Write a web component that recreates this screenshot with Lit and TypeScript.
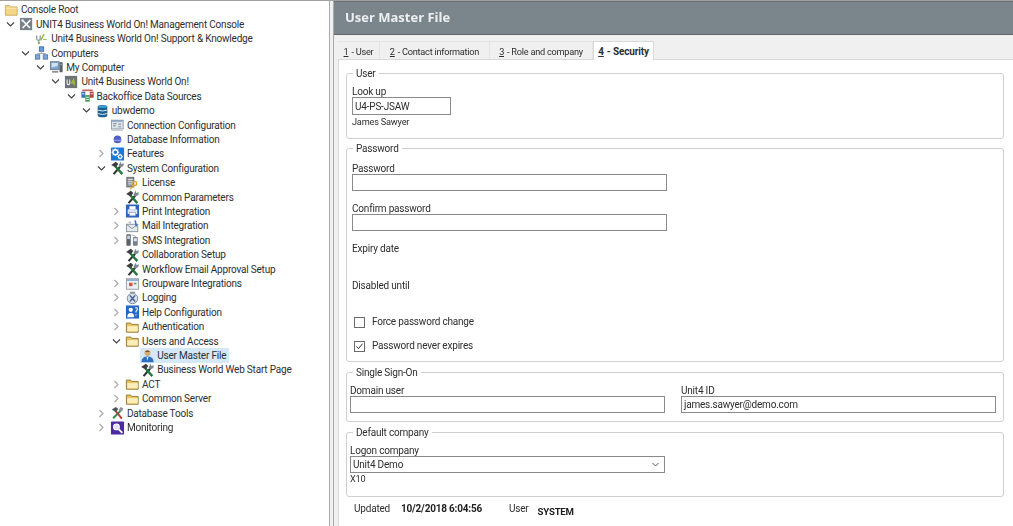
import { LitElement, css, html, svg } from "lit";
import { customElement } from "lit/decorators.js";

type Node = { label: string; level: number; icon: string; arrow?: "open" | "closed"; selected?: boolean };

const tree: Node[] = [
    { label: "Console Root", level: 0, icon: "folderFlat" },
    { label: "UNIT4 Business World On! Management Console", level: 1, icon: "mmc", arrow: "open" },
    { label: "Unit4 Business World On! Support & Knowledge", level: 2, icon: "link" },
    { label: "Computers", level: 2, icon: "network", arrow: "open" },
    { label: "My Computer", level: 3, icon: "computer", arrow: "open" },
    { label: "Unit4 Business World On!", level: 4, icon: "u4", arrow: "open" },
    { label: "Backoffice Data Sources", level: 5, icon: "sources", arrow: "open" },
    { label: "ubwdemo", level: 6, icon: "db", arrow: "open" },
    { label: "Connection Configuration", level: 7, icon: "conn" },
    { label: "Database Information", level: 7, icon: "info" },
    { label: "Features", level: 7, icon: "gear", arrow: "closed" },
    { label: "System Configuration", level: 7, icon: "tools", arrow: "open" },
    { label: "License", level: 8, icon: "license" },
    { label: "Common Parameters", level: 8, icon: "tools" },
    { label: "Print Integration", level: 8, icon: "print", arrow: "closed" },
    { label: "Mail Integration", level: 8, icon: "mail", arrow: "closed" },
    { label: "SMS Integration", level: 8, icon: "sms", arrow: "closed" },
    { label: "Collaboration Setup", level: 8, icon: "tools" },
    { label: "Workflow Email Approval Setup", level: 8, icon: "tools" },
    { label: "Groupware Integrations", level: 8, icon: "groupware", arrow: "closed" },
    { label: "Logging", level: 8, icon: "logging", arrow: "closed" },
    { label: "Help Configuration", level: 8, icon: "help", arrow: "closed" },
    { label: "Authentication", level: 8, icon: "folder", arrow: "closed" },
    { label: "Users and Access", level: 8, icon: "folder", arrow: "open" },
    { label: "User Master File", level: 9, icon: "user", selected: true },
    { label: "Business World Web Start Page", level: 9, icon: "tools" },
    { label: "ACT", level: 8, icon: "folder", arrow: "closed" },
    { label: "Common Server", level: 8, icon: "folder", arrow: "closed" },
    { label: "Database Tools", level: 7, icon: "dbtools", arrow: "closed" },
    { label: "Monitoring", level: 7, icon: "monitor", arrow: "closed" },
];

const icons: Record<string, unknown> = {
    folderFlat: svg`<path d="M1 3h5l1 1.500h7.500v9.500H1z" fill="#f3d688" stroke="#c9a85c"/><path d="M1.500 6h13" stroke="#fbeab8"/>`,
    folder: svg`<path d="M1 3.500h5l1 1.500h7.500v9H1z" fill="#e9c45e" stroke="#8f7430"/><path d="M2 7h12v6H2z" fill="#fbeeb9"/>`,
    mmc: svg`<rect x=".5" y="1" width="14" height="14" fill="#77818a"/><path d="M3 3.500l9 9M12.500 3.500l-9 9" stroke="#fff" stroke-width="1.800"/><circle cx="3.500" cy="4" r="1.500" fill="#dfe4e8"/>`,
    link: svg`<path d="M2.500 4v3.500q0 2 2 2t2-2V4" fill="none" stroke="#7d8a96" stroke-width="1.300"/><path d="M7 9.500l4-7M5 10v4" stroke="#8fb339" stroke-width="1.500"/><path d="M3.500 12.500h3" stroke="#7d8a96"/><path d="M10 8.500h4" stroke="#8fb339"/>`,
    network: svg`<rect x="5.500" y="1" width="5" height="5" fill="#6d9ad2" stroke="#3a6ba8"/><rect x="1" y="10" width="5" height="5" fill="#7fa6da" stroke="#4f78b0"/><rect x="10" y="10" width="5" height="5" fill="#7fa6da" stroke="#4f78b0"/><path d="M8 6v2.500M3.500 10V8.500h9v1.500" fill="none" stroke="#9a9a9a"/>`,
    computer: svg`<rect x="1" y="2" width="10" height="9" fill="#7fa7cf" stroke="#687684"/><path d="M2.500 3.500h7v3l-7 2z" fill="#cfe2f2"/><path d="M3 13.500h7" stroke="#8a8f94" stroke-width="2"/><rect x="11.500" y="2.500" width="3.500" height="11.500" fill="#59636c"/><path d="M12.500 5h1.500" stroke="#b9c2c9"/>`,
    u4: svg`<rect x=".5" y="1" width="14" height="14" fill="#6d7379"/><path d="M3 5v4.500q0 1.500 1.500 1.500T6 9.500V5" fill="none" stroke="#eceff1" stroke-width="1.200"/><path d="M11 4l-3 5h4M11 6v6" fill="none" stroke="#a9c23f" stroke-width="1.300"/>`,
    sources: svg`<rect x="1" y="3" width="4.500" height="7" fill="#3f6fb5"/><rect x="10.500" y="3" width="4.500" height="7" fill="#b8433f"/><rect x="5.500" y="7" width="5" height="7.500" fill="#3f9a58"/><path d="M2 1.500h12" stroke="#c36b67" stroke-width="2"/><path d="M6.500 9.500h3M6.500 12h3M2 5.500h2.500M11.500 5.500h2.500" stroke="#fff"/>`,
    db: svg`<path d="M2.500 3q0-2 5.500-2t5.500 2v10q0 2-5.500 2t-5.500-2z" fill="#1a5f91"/><ellipse cx="8" cy="3" rx="5" ry="1.400" fill="#37a5d6"/><path d="M3 7q5 2 10 0M3 11q5 2 10 0" fill="none" stroke="#fff"/>`,
    conn: svg`<rect x="1" y="2.500" width="13.500" height="10" fill="#dfe5ea" stroke="#8b97a3"/><path d="M1.500 3.500h12.500" stroke="#7c99b8" stroke-width="1.500"/><path d="M3 6.500h4M3 9h3M9 7h3M9 10h3" stroke="#6b7783"/><path d="M1 14h13" stroke="#aab2ba"/>`,
    info: svg`<circle cx="8" cy="8.500" r="4.400" fill="#5360c9"/><path d="M4 9.500h8" stroke="#a9b0ec"/>`,
    gear: svg`<rect x=".5" y=".5" width="15" height="15" rx="1" fill="#1e78d8"/><circle cx="5.500" cy="6" r="2.800" fill="none" stroke="#fff" stroke-width="1.600"/><path d="M5.500 1.600v1.600M5.500 8.800v1.600M1.100 6h1.600M8.300 6h1.600M2.400 2.900l1.100 1.100M7.500 8l1.100 1.100M8.600 2.900L7.500 4M3.500 8L2.400 9.100" stroke="#fff" stroke-width="1.100"/><circle cx="11" cy="11" r="2" fill="none" stroke="#fff" stroke-width="1.400"/><path d="M11 7.800v1.200M11 13v1.200M7.800 11H9M13 11h1.200" stroke="#fff"/>`,
    tools: svg`<path d="M3.500 15L11 6.500" stroke="#333" stroke-width="2.400"/><path d="M13.500 15L5.500 6" stroke="#1f7a3a" stroke-width="2.600"/><path d="M.8 4.500L6 .8l3 2.700L5.800 7.500z" fill="#3e3e3e"/><path d="M9.200 5.500L11.500.8l1 2.700 2.800-1-.6 3.300-3.200 1.500z" fill="#7d8790"/>`,
    license: svg`<rect x="1.500" y="1.500" width="8" height="11" fill="#8f9499" stroke="#5f6468"/><path d="M3 4h5M3 6.500h5M3 9h5" stroke="#e8e8e8"/><circle cx="10.500" cy="8.500" r="2.300" fill="none" stroke="#d9a92f" stroke-width="1.500"/><path d="M9.500 10.500L5.500 15" stroke="#d9a92f" stroke-width="1.700"/>`,
    print: svg`<rect x=".5" y=".5" width="15" height="15" rx="1" fill="#2d62c0"/><rect x="4.500" y="2.500" width="7" height="4" fill="#fff"/><rect x="2.500" y="6" width="11" height="5.500" rx="1" fill="#dbe4f3"/><rect x="4.500" y="9.500" width="7" height="4" fill="#fff" stroke="#6b8bc8" stroke-width=".6"/>`,
    mail: svg`<rect x="1" y="6" width="13" height="8.500" fill="#e4e9ee" stroke="#7d8a96"/><path d="M1 6l6.500 5L14 6" fill="none" stroke="#7d8a96"/><path d="M11 1.500l1.500 7" stroke="#3f6fb5" stroke-width="1.800"/><circle cx="5" cy="4" r="1.500" fill="#b9c3cc"/>`,
    sms: svg`<rect x="1" y="1.500" width="5" height="13" rx="1" fill="#5b6168"/><rect x="2" y="3" width="3" height="4" fill="#c5d6e4"/><rect x="8.500" y="4.500" width="5.500" height="10" rx="1" fill="#77808a"/><rect x="9.500" y="6" width="3.500" height="3.500" fill="#dfe6ec"/><path d="M7 2l5 2" stroke="#9aa3ab"/>`,
    groupware: svg`<rect x="1" y="2" width="14" height="12" fill="#eef1f4" stroke="#8f99a3"/><path d="M1.500 3.500h13" stroke="#6f94c4" stroke-width="1.500"/><rect x="4" y="6.500" width="4" height="4" fill="#d9534f"/><rect x="9.500" y="6.500" width="3" height="2" fill="#70a85a"/>`,
    logging: svg`<circle cx="8" cy="8.500" r="6" fill="#d5dfe9" stroke="#6d7f92"/><path d="M5 5l6 7M11 5l-6 7" stroke="#3f6189" stroke-width="1.600"/><path d="M5 1.500h6" stroke="#8d9aa7" stroke-width="1.500"/>`,
    help: svg`<rect x=".5" y=".5" width="15" height="15" fill="#2367c4"/><circle cx="6" cy="5.500" r="2.400" fill="#fff"/><path d="M2 14q0-5 4-5t4 5z" fill="#fff"/><path d="M11 3.500q2.500-1 2.500 1T12 7v1.500M12 10.500v1.500" fill="none" stroke="#fff" stroke-width="1.200"/>`,
    user: svg`<circle cx="8" cy="4.500" r="3.400" fill="#e0a868"/><path d="M4.800 3.500q3-3.500 6.400 0z" fill="#7a5228"/><path d="M1 15q0-6.500 7-6.500t7 6.500z" fill="#2e6fc2"/><path d="M7 9h2l-1 4z" fill="#fff"/>`,
    dbtools: svg`<path d="M3 14L12 5" stroke="#2f8a45" stroke-width="2.200"/><path d="M13 14.500L6 6" stroke="#b03a32" stroke-width="2.200"/><path d="M1.500 4L6 1l3 2.500L6 7z" fill="#50565c"/><path d="M9.500 4.500l2-3.500 3 1.500-1 3-3 1z" fill="#8a949d"/>`,
    monitor: svg`<rect x=".5" y=".5" width="15" height="15" rx="1" fill="#4d2aa0"/><circle cx="6.800" cy="6.800" r="3.300" fill="#e4e0f4" stroke="#fff" stroke-width="1.200"/><path d="M9.500 9.500L13.500 13.500" stroke="#fff" stroke-width="2"/>`,
};

@customElement("app-root")
export class AppRoot extends LitElement {
    static override styles = css`
        :host {
            display: block;
            width: 1013px;
            height: 526px;
            overflow: hidden;
            font-family: Roboto, "Open Sans", sans-serif;
            font-size: 10px;
            letter-spacing: -0.2px;
            color: #2e2e2e;
            background: #f0f0f0;
        }

        /* the reference is a slightly soft, rescaled capture */
        .app {
            display: flex;
            height: 100%;
            box-sizing: border-box;
            border-top: 1px solid #a0a0a0;
            filter: blur(0.3px);
        }

        .tree {
            width: 330px;
            flex: none;
            box-sizing: border-box;
            background: #fff;
            border-right: 1px solid #a9a9a9;
            padding-top: 1.6px;
        }

        .row {
            display: flex;
            align-items: center;
            height: 14.41px;
            white-space: nowrap;
        }

        .arrow {
            width: 15px;
            flex: none;
            display: flex;
            justify-content: center;
        }

        .item {
            display: flex;
            align-items: center;
            gap: 2px;
            height: 14.41px;
            margin-left: 1px;
            padding-right: 3px;
        }

        .item.selected {
            background: #d5e8f8;
        }

        .item svg {
            flex: none;
        }

        .main {
            flex: 1;
            display: flex;
            flex-direction: column;
            margin-left: 3px;
            min-width: 0;
            border-left: 1px solid #a9a9a9;
        }

        .title {
            height: 34px;
            flex: none;
            display: flex;
            align-items: center;
            box-sizing: border-box;
            padding: 0 0 2px 11px;
            background: #7b858c;
            border-top: 1px solid #6b6f73;
            border-bottom: 1px solid #5f676d;
            color: #edf0f2;
            font-family: "Open Sans", sans-serif;
            font-size: 13px;
            font-weight: 700;
            letter-spacing: 0;
        }

        .tabs {
            display: flex;
            align-items: flex-end;
            height: 24px;
            flex: none;
            padding-left: 4px;
        }

        .tab {
            height: 18px;
            padding-top: 1px;
            display: flex;
            align-items: center;
            justify-content: center;
            box-sizing: border-box;
            font-size: 9.2px;
            letter-spacing: -0.25px;
            border-top: 1px solid #e4e4e4;
            border-right: 1px solid #e4e4e4;
        }

        .tab u {
            margin-right: 3px;
        }

        .tab.active {
            height: 19px;
            margin-bottom: -1px;
            background: #fff;
            border: 1px solid #d9d9d9;
            border-bottom: none;
            font-size: 10px;
            font-weight: 700;
            letter-spacing: -0.15px;
            position: relative;
        }

        .body {
            flex: 1;
            margin-left: 4px;
            background: #fff;
            border-top: 1px solid #d9d9d9;
            border-left: 1px solid #d9d9d9;
            padding: 6px 9px 0 7px;
            display: flex;
            flex-direction: column;
        }

        fieldset {
            margin: 0;
            padding: 0 3px 0 5px;
            border: 1px solid #cfcfcf;
            border-radius: 3px;
            min-width: 0;
            box-sizing: border-box;
        }

        legend {
            position: relative;
            top: 1px;
            margin-left: 1px;
            padding: 0 3px;
            line-height: 14px;
        }

        .user {
            height: 73px;
        }

        .password {
            height: 221px;
            margin-top: 2px;
        }

        .sso {
            height: 57px;
            margin-top: 3px;
        }

        .company {
            height: 72px;
            margin-top: 3px;
        }

        label,
        .label {
            display: block;
        }

        label {
            line-height: 12px;
            margin: 6px 0 -1px;
        }

        .label {
            line-height: 14px;
        }

        .field {
            height: 15px;
            width: 309px;
            display: flex;
            align-items: center;
            justify-content: space-between;
            padding: 0 2px;
            border: 1px solid #8a8a8a;
            background: #fff;
            box-sizing: content-box;
        }

        .field.short {
            width: 93px;
            height: 16px;
        }

        .field svg {
            margin-right: 3px;
        }

        .note {
            font-size: 9.2px;
            line-height: 14px;
        }

        .note.tight {
            margin-top: -1px;
        }

        .password label.first {
            margin-top: 8px;
        }

        .password label.confirm {
            margin-top: 12px;
        }

        .label.expiry {
            margin-top: 11px;
        }

        .label.disabled {
            margin-top: 23px;
        }

        .check {
            display: flex;
            align-items: center;
            gap: 7px;
            margin-left: 2px;
            line-height: 14px;
        }

        .check.one {
            margin-top: 22px;
        }

        .check.two {
            margin-top: 10px;
        }

        .box {
            width: 9px;
            height: 9px;
            border: 1px solid #6a6a6a;
            background: #fff;
            display: flex;
        }

        .sso-row {
            display: flex;
            gap: 16px;
            margin-left: -2px;
        }

        .company-block {
            margin-left: -2px;
        }

        .footer {
            display: flex;
            align-items: flex-start;
            padding: 5px 0 0 8px;
            line-height: 14px;
        }

        .footer b {
            color: #1e1e1e;
            font-weight: 700;
        }

        .f-date {
            margin-left: 11px;
        }

        .f-user {
            margin-left: 27px;
        }

        .f-system {
            margin: 3px 0 0 9px;
            font-size: 9.6px;
        }
    `;

    private renderNode(n: Node) {
        const pad = n.level === 0 ? 3 : 3 + (n.level - 1) * 15.15;
        return html`
            <div class="row" style="padding-left: ${pad}px">
                ${n.level > 0
                    ? html`<span class="arrow">${this.renderArrow(n.arrow)}</span>`
                    : ""}
                <span class="item ${n.selected ? "selected" : ""}">
                    <svg width="15" height="14" viewBox="0 0 16 16">${icons[n.icon]}</svg>
                    <span>${n.label}</span>
                </span>
            </div>
        `;
    }

    private renderArrow(kind?: "open" | "closed") {
        if (kind === "open") {
            return html`<svg width="9" height="9" viewBox="0 0 9 9">
                <path d="M1 2.500l3.500 3.500L8 2.500" fill="none" stroke="#404040" stroke-width="1.100" />
            </svg>`;
        }
        if (kind === "closed") {
            return html`<svg width="9" height="9" viewBox="0 0 9 9">
                <path d="M2.500 1l3.500 3.500L2.500 8" fill="none" stroke="#a6a6a6" stroke-width="1.100" />
            </svg>`;
        }
        return "";
    }

    override render() {
        return html`
            <div class="app">
                <div class="tree">${tree.map((n) => this.renderNode(n))}</div>
                <div class="main">
                    <div class="title">User Master File</div>
                    <div class="tabs">
                        <div class="tab" style="width: 42px"><u>1</u>- User</div>
                        <div class="tab" style="width: 110px"><u>2</u>- Contact information</div>
                        <div class="tab" style="width: 103px"><u>3</u>- Role and company</div>
                        <div class="tab active" style="width: 61px"><u>4</u>- Security</div>
                    </div>
                    <div class="body">
                        <fieldset class="user">
                            <legend>User</legend>
                            <label>Look up</label>
                            <div class="field short">U4-PS-JSAW</div>
                            <div class="note">James Sawyer</div>
                        </fieldset>
                        <fieldset class="password">
                            <legend>Password</legend>
                            <label class="first">Password</label>
                            <div class="field"></div>
                            <label class="confirm">Confirm password</label>
                            <div class="field"></div>
                            <div class="label expiry">Expiry date</div>
                            <div class="label disabled">Disabled until</div>
                            <div class="check one"><span class="box"></span>Force password change</div>
                            <div class="check two">
                                <span class="box">
                                    <svg width="9" height="9" viewBox="0 0 9 9">
                                        <path d="M1.500 4.500l2 2.200 4-5" fill="none" stroke="#333" />
                                    </svg>
                                </span>
                                Password never expires
                            </div>
                        </fieldset>
                        <fieldset class="sso">
                            <legend>Single Sign-On</legend>
                            <div class="sso-row">
                                <div>
                                    <label>Domain user</label>
                                    <div class="field"></div>
                                </div>
                                <div>
                                    <label>Unit4 ID</label>
                                    <div class="field">james.sawyer@demo.com</div>
                                </div>
                            </div>
                        </fieldset>
                        <fieldset class="company">
                            <legend>Default company</legend>
                            <div class="company-block">
                                <label>Logon company</label>
                                <div class="field">
                                    Unit4 Demo
                                    <svg width="7" height="5" viewBox="0 0 7 5">
                                        <path d="M.5 1l3 3 3-3" fill="none" stroke="#555" />
                                    </svg>
                                </div>
                                <div class="note tight">X10</div>
                            </div>
                        </fieldset>
                        <div class="footer">
                            <span>Updated</span>
                            <b class="f-date">10/2/2018 6:04:56</b>
                            <span class="f-user">User</span>
                            <b class="f-system">SYSTEM</b>
                        </div>
                    </div>
                </div>
            </div>
        `;
    }
}
